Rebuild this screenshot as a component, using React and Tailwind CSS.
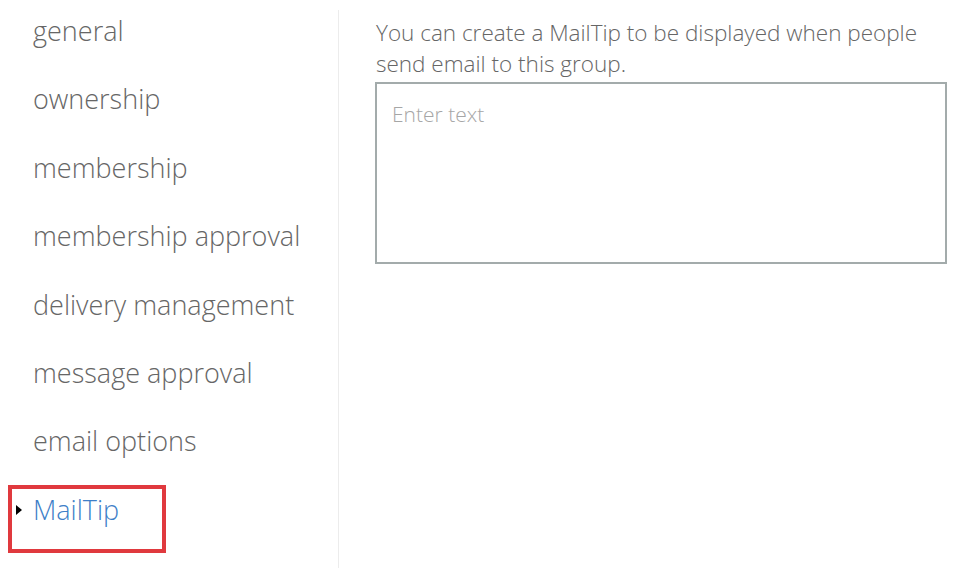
export default function App() {
  const items = [
    'general',
    'ownership',
    'membership',
    'membership approval',
    'delivery management',
    'message approval',
    'email options',
  ];

  return (
    <div className="flex h-[568px] w-[966px] bg-white overflow-hidden" style={{ fontFamily: '"Open Sans", "Noto Sans", sans-serif' }}>
      {/* left nav */}
      <div className="w-[338px] shrink-0">
        <ul className="mt-[-3px]">
          {items.map((item) => (
            <li key={item} className="h-[68.43px] flex items-center pl-[33px] text-[27px] font-light text-[#666666]">
              {item}
            </li>
          ))}
          <li className="h-[68.43px] flex items-center pl-[33px] text-[27px] font-light text-[#3f7fc8] relative">
            <span className="absolute left-[16px] top-[29px] w-0 h-0 border-y-[5px] border-y-transparent border-l-[6px] border-l-black"></span>
            <span className="absolute left-[8px] top-[9px] w-[158px] h-[68px] border-[4px] border-[#e0393e]"></span>
            MailTip
          </li>
        </ul>
      </div>

      {/* divider */}
      <div className="w-px bg-[#ececec] mt-[10px]"></div>

      {/* content */}
      <div className="flex-1 pl-[36px] pt-[17px]">
        <p className="pl-px text-[22.5px] leading-[31px] font-light text-[#666666] w-[572px]">
          You can create a MailTip to be displayed when people send email to this group.
        </p>
        <div className="mt-[3px] w-[572px] h-[182px] border-2 border-[#a3abab] pl-[15px] pt-[15px]">
          <span className="text-[21px] font-light text-[#a6a6a6]">Enter text</span>
        </div>
      </div>
    </div>
  );
}
